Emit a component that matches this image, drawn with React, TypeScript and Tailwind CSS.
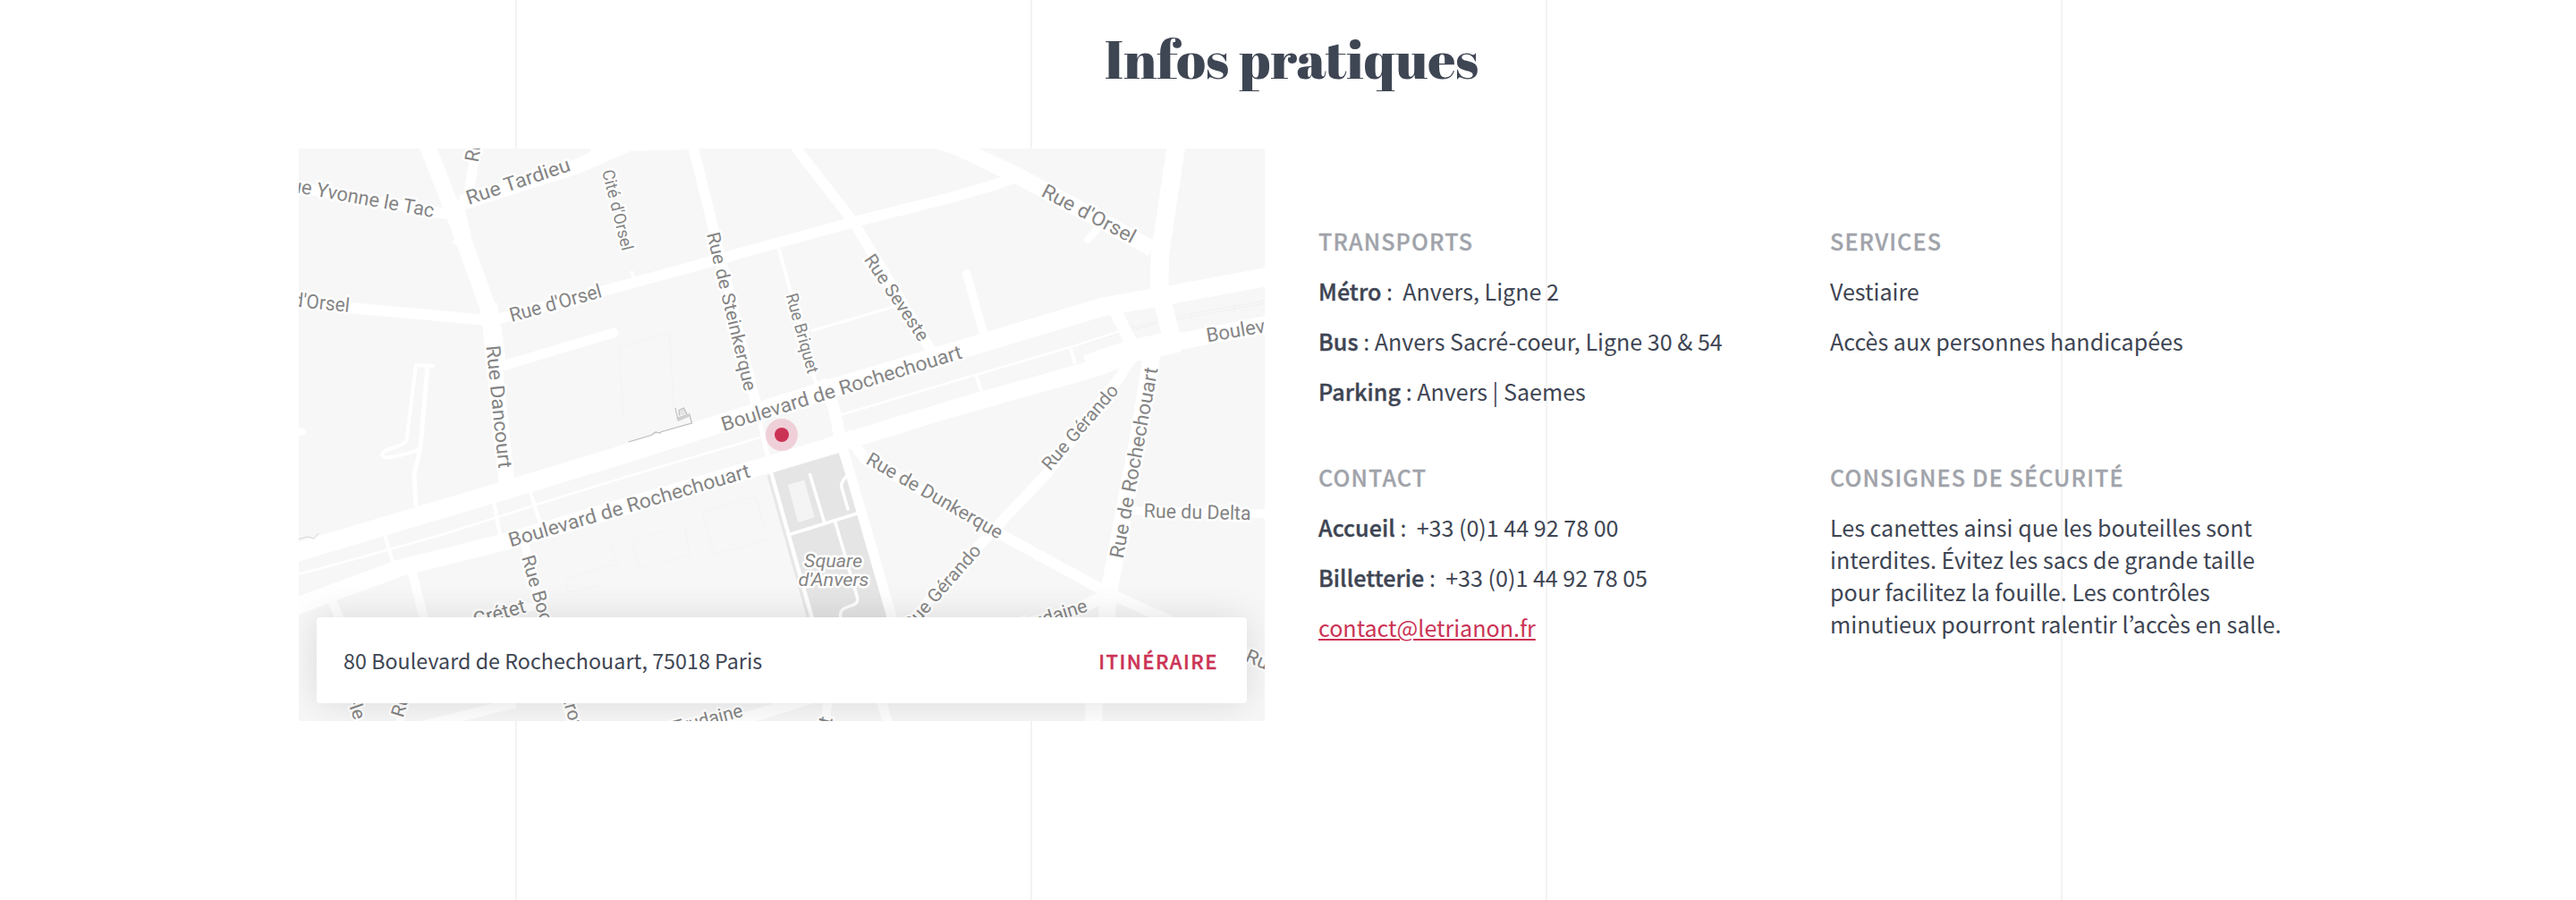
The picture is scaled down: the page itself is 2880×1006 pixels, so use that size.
import type { ReactNode } from "react";

type Point = [number, number];

/** A street label running from the start to the end of its baseline. */
type Label = { text: string; from: Point; to: Point; size: number };

/** A street: its centre line, its width and, for dead ends, a round cap. */
type Road = { d: string; w: number; round?: boolean };

const ROADS: Road[] = [
  { d: "M475 156 L506.7 236.7 L547 348 L553 410 L567 545", w: 18 },
  { d: "M510 225 L519 262 L512 275", w: 15 },
  { d: "M546 340 L552 375 L556 410", w: 20 },
  { d: "M330 209 L520 243", w: 12 },
  { d: "M515 227 L645 186 L704 160", w: 17 },
  { d: "M524 216 L533 160", w: 11 },
  { d: "M326 337 L390 344 L545 358", w: 12 },
  { d: "M545 360 L570 353 L700 318.3 L953 248.5 L1060 221.7 L1117 205 L1137 197", w: 12 },
  { d: "M562 409 L686 372", w: 11, round: true },
  { d: "M773 156 L776 168 L797 253 L845 450", w: 11.5 },
  { d: "M885 156 L895 172 L953.3 246.7 L1043 395", w: 11.5 },
  { d: "M870.7 278 L914 435", w: 4 },
  { d: "M906.7 370 L1003 341.7", w: 3 },
  { d: "M706 303 L709 313", w: 4 },
  { d: "M324 620 L334 616.7 L430 588 L565 548 L700 507 L810 472 L943 430 L1107 380.7 L1233 343 L1290 333 L1424 308", w: 21 },
  { d: "M324 681 L334 676.7 L446.7 635 L566.7 605 L680 571.7 L867 517 L967 486.7 L1060 458 L1227 411 L1267 395 L1313 383 L1424 361", w: 19 },
  { d: "M1215 409 L1262 393 L1318 381", w: 25 },
  { d: "M334 641.7 L400 624 L500 596 L603 563 L700 533 L855 487.5", w: 2.5 },
  { d: "M930 466.7 L1060 428 L1197 388 L1253 370", w: 2.5 },
  { d: "M430 598 L439 628", w: 4 },
  { d: "M552 560 L559 598", w: 4 },
  { d: "M593 550 L604 585", w: 4 },
  { d: "M848 466 L859 512", w: 5 },
  { d: "M1091.7 420 L1098 440", w: 4 },
  { d: "M1197 390 L1202 407", w: 4 },
  { d: "M918 425 L932 455 L941 495", w: 13 },
  { d: "M1247 348 L1268 390", w: 14 },
  { d: "M1298 330 L1311 382", w: 20 },
  { d: "M1316 156 L1297 283 L1295.7 335", w: 20.5 },
  { d: "M1050 158 L1067 163 L1137 196 L1288 278", w: 18 },
  { d: "M1226 257 L1216 268", w: 8, round: true },
  { d: "M1080.7 306 L1101 378", w: 9.5, round: true },
  { d: "M1272 390 L1250 424 L1170 530 L1110 593 L1035 675 L1015 700", w: 11.5 },
  { d: "M1288 395 L1273 487 L1240 660 L1236 700 L1223 785 L1223 816", w: 19 },
  { d: "M1262 570.5 L1424 574.5", w: 9.5 },
  { d: "M945 484 L968 514 L1120 598 L1237 661.7 L1310 695 L1424 745", w: 12 },
  { d: "M1240 664 L1205 681 L1120 706", w: 14 },
  { d: "M920 776 L850 798 L750 826", w: 13 },
  { d: "M576 786 L470 812", w: 11 },
  { d: "M861.7 526 L909 694", w: 4 },
  { d: "M935 478 L951.7 533 L1000 700", w: 11 },
  { d: "M926 780 L922 812", w: 10 },
  { d: "M984 780 L994 812", w: 11 },
  { d: "M486 409 L465 408 L455 490 Q454 496 444 499 L432 503 Q424 508 430 511 Q436 513 468 503", w: 4 },
  { d: "M478 410 L470 500 L463 532 L465 566", w: 5 },
  { d: "M330 482.5 L338 482.5", w: 8, round: true },
  { d: "M460 636 L476 700", w: 10 },
  { d: "M370 670 L384 700", w: 10 },
  { d: "M585 600 L600 665 L640 815", w: 9 },
  { d: "M600 677 L530 696", w: 9 },
  { d: "M452 780 L446 815", w: 9 },
];

const LABELS: Label[] = [
  { text: "Rue Yvonne le Tac", from: [311, 211.5], to: [484, 243], size: 22 },
  { text: "Rue Tardieu", from: [524, 229], to: [639, 190.5], size: 22 },
  { text: "Cité d'Orsel", from: [673, 191.5], to: [695.5, 281], size: 19 },
  { text: "Rue d'Orsel", from: [286, 338], to: [390, 349], size: 22 },
  { text: "Rue d'Orsel", from: [572, 360], to: [674, 332], size: 22 },
  { text: "Rue", from: [534.5, 182], to: [541, 147], size: 22 },
  { text: "Rue Dancourt", from: [543.5, 387], to: [557.5, 524], size: 22 },
  { text: "Rue de Steinkerque", from: [790, 261.5], to: [832.5, 438], size: 20.5 },
  { text: "Rue Briquet", from: [878.5, 330], to: [903, 418.5], size: 19 },
  { text: "Rue Seveste", from: [965.5, 290], to: [1028, 383], size: 20.5 },
  { text: "Boulevard de Rochechouart", from: [809, 482], to: [1077, 400], size: 22 },
  { text: "Rue d'Orsel", from: [1163, 218.5], to: [1265, 272.5], size: 22 },
  { text: "Boulevard", from: [1350, 382.5], to: [1446.5, 366], size: 22 },
  { text: "Rue Gérando", from: [1174, 527], to: [1251.5, 437], size: 20.5 },
  { text: "Rue de Rochechouart", from: [1255.5, 625], to: [1294.5, 412], size: 22 },
  { text: "Rue du Delta", from: [1278.5, 578.3], to: [1398.5, 581.3], size: 22 },
  { text: "Rue de Dunkerque", from: [967, 517.5], to: [1116, 603], size: 21 },
  { text: "Rue Gérando", from: [1018.7, 706], to: [1098, 616], size: 20.5 },
  { text: "Boulevard de Rochechouart", from: [571, 611.5], to: [840, 533], size: 22 },
  { text: "Rue Bochart de Saron", from: [583, 623], to: [639.5, 818], size: 21 },
  { text: "Rue Crétet", from: [490, 712], to: [589, 684], size: 22 },
  { text: "-le", from: [388.5, 784], to: [396, 805.5], size: 20.5 },
  { text: "Rue", from: [450.5, 803], to: [461, 768], size: 20.5 },
  { text: "Trudaine", from: [754, 820.7], to: [831.5, 800.5], size: 21 },
  { text: "Trudaine", from: [1139, 708], to: [1217, 683], size: 21 },
  { text: "Rue", from: [1391, 738.5], to: [1426, 753.5], size: 21 },
  { text: "t", from: [929, 811], to: [931, 803], size: 22 },
];

function StreetLabel({ text, from, to, size }: Label) {
  const [x, y] = from;
  const dx = to[0] - x;
  const dy = to[1] - y;
  const angle = (Math.atan2(dy, dx) * 180) / Math.PI;
  return (
    <text
      transform={`translate(${x} ${y}) rotate(${angle})`}
      fontSize={size}
      textLength={Math.hypot(dx, dy)}
      lengthAdjust="spacingAndGlyphs"
    >
      {text}
    </text>
  );
}

function MapDrawing() {
  return (
    <svg className="block h-full w-full" viewBox="334 166 1080 640" role="img" aria-label="Plan du quartier">
      <rect x="334" y="166" width="1080" height="640" fill="#f7f7f7" />
      <path d="M660 166 H776 V167 L700 169 L683 174 L660 181 Z" fill="#fff" />
      <g fill="none" stroke="#f1f1f1" strokeWidth="1.2">
        <path d="M1190 391 L1253 372 L1300 360 L1424 337" />
        <path d="M1253 369 L1320 353 L1424 334" />
        <path d="M1331 348 L1332 359 M1379 340 L1380 349" />
      </g>
      <g fill="none" stroke="#f4f4f4" strokeWidth="1">
        <path d="M692 388 L748 372 L754 462 M692 388 L697 466" />
        <path d="M785 572 L845 555 L858 603 L798 620 Z" />
        <path d="M706 603 L765 588 L771 620 L714 636 Z" />
        <path d="M632 648 L690 630 L682 604 M632 648 L636 662 L668 655" />
      </g>
      <path d="M864 528.5 L936 507 L941 508 L963 575 L995 692 H909 Z" fill="#e5e5e5" />
      <path d="M859 531 L904 692" stroke="#e7e7e7" strokeWidth="3" fill="none" />
      <path d="M880.7 541.7 L899.3 536.7 L910.7 578.3 L892.3 584 Z" fill="#f4f4f4" />
      <g fill="none" stroke="#fff">
        {ROADS.map((road) => (
          <path
            key={road.d}
            d={road.d}
            strokeWidth={road.w}
            strokeLinecap={road.round ? "round" : "butt"}
            strokeLinejoin="round"
          />
        ))}
        <g strokeWidth="3.5" strokeLinecap="round" strokeLinejoin="round">
          <path d="M884 597 L963 572.5" />
          <path d="M905.5 530.5 L922 585" />
          <path d="M934 584 L958.5 668 Q960 674 954 676 L944 680 Q938 683 940 692" />
          <path d="M948 569 L941 545 Q940 540 944 535 L950 529" />
        </g>
      </g>
      <path
        d="M702.7 494 L728 486.5 L733 483 L738 484 L739 482.7 L773.5 473 L770.7 462.5"
        fill="none"
        stroke="#bdbdbd"
        strokeWidth="1.2"
      />
      <path d="M756 467 L770.5 462 L771 465.5 L758 471 Z" fill="#cfcfcf" />
      <path
        d="M755 456 L757.5 467 M759.5 464.5 L759 458.5 L764.5 456 L768 463"
        fill="#e4e4e4"
        stroke="#bdbdbd"
        strokeWidth="1.1"
      />
      <path d="M334 602.5 L344 600 L351 602 L356 596" fill="none" stroke="#d5d5d5" strokeWidth="1" />
      <g
        className="font-['Roboto',sans-serif]"
        fill="#858585"
        stroke="#fff"
        strokeWidth="5"
        strokeLinejoin="round"
        paintOrder="stroke"
      >
        {LABELS.map((label, i) => (
          <StreetLabel key={i} {...label} />
        ))}
        <g fontSize="21" fontStyle="italic">
          <text x="899" y="633.5" textLength="65" lengthAdjust="spacingAndGlyphs">
            Square
          </text>
          <text x="892.5" y="655.3" textLength="79" lengthAdjust="spacingAndGlyphs">
            d'Anvers
          </text>
        </g>
      </g>
      <circle cx="874" cy="486" r="18" fill="#f0d0d8" />
      <circle cx="874" cy="486" r="8" fill="#cb3355" />
    </svg>
  );
}

function Strong({ children }: { children: ReactNode }) {
  return (
    <strong className="font-medium tracking-[0.08px] [-webkit-text-stroke:0.4px_#3e4553]">{children}</strong>
  );
}

function InfoBlock({ title, children }: { title: string; children: ReactNode }) {
  return (
    <section className="flex flex-col gap-5">
      <h3 className="font-medium tracking-[1.15px] whitespace-nowrap text-[#a0a3aa] uppercase [-webkit-text-stroke:0.3px_#a0a3aa]">
        {title}
      </h3>
      {children}
    </section>
  );
}

export default function App() {
  return (
    <div className="relative h-[1006px] w-[2880px] overflow-hidden bg-white font-['Noto_Sans_CJK_JP',sans-serif] text-[#3e4553]">
      <div className="absolute inset-0 grid grid-cols-5" aria-hidden="true">
        <span />
        <span className="border-l-2 border-[#f3f3f3]" />
        <span className="border-l-2 border-[#f3f3f3]" />
        <span className="border-l-2 border-[#f3f3f3]" />
        <span className="border-l-2 border-[#f3f3f3]" />
      </div>

      <main className="relative pt-[25px]">
        <h2 className="pl-[8px] text-center font-['Abril_Fatface','Liberation_Serif',serif] text-[60px] leading-[80px] font-normal tracking-[0.15px]">
          Infos pratiques
        </h2>

        <div className="mt-[61px] ml-[334px] flex items-center gap-[60px]">
          <div className="relative h-[640px] w-[1080px] shrink-0 overflow-hidden">
            <MapDrawing />
            <div className="absolute inset-x-5 bottom-5 flex h-24 items-center justify-between rounded bg-white pr-8 pl-[30px] shadow-[0_0_40px_rgba(0,0,0,0.12)]">
              <address className="text-[23.28px] tracking-[0.03px] not-italic">
                80 Boulevard de Rochechouart, 75018 Paris
              </address>
              <a className="text-[22px] font-medium tracking-[1.5px] text-[#cb3355] [-webkit-text-stroke:0.4px_#cb3355]">
                ITINÉRAIRE
              </a>
            </div>
          </div>

          <div className="grid grid-cols-[572px_572px] gap-y-[60px] pb-[2px] text-[25.07px] leading-9">
            <InfoBlock title="Transports">
              <p>
                <Strong>Métro</Strong> : &nbsp;Anvers, Ligne 2
              </p>
              <p>
                <Strong>Bus</Strong> : Anvers Sacré-coeur, Ligne 30 &amp; 54
              </p>
              <p>
                <Strong>Parking</Strong> : Anvers | Saemes
              </p>
            </InfoBlock>
            <InfoBlock title="Services">
              <p>Vestiaire</p>
              <p>Accès aux personnes handicapées</p>
            </InfoBlock>
            <InfoBlock title="Contact">
              <p>
                <Strong>Accueil</Strong> : &nbsp;+33 (0)1 44 92 78 00
              </p>
              <p>
                <Strong>Billetterie</Strong> : &nbsp;+33 (0)1 44 92 78 05
              </p>
              <p>
                <a className="text-[#cb3355] underline decoration-2 underline-offset-[2px]">contact@letrianon.fr</a>
              </p>
            </InfoBlock>
            <InfoBlock title="Consignes de sécurité">
              <p className="tracking-[0.02px]">
                Les canettes ainsi que les bouteilles sont
                <br />
                interdites. Évitez les sacs de grande taille
                <br />
                pour facilitez la fouille. Les contrôles
                <br />
                minutieux pourront ralentir l’accès en salle.
              </p>
            </InfoBlock>
          </div>
        </div>
      </main>
    </div>
  );
}
